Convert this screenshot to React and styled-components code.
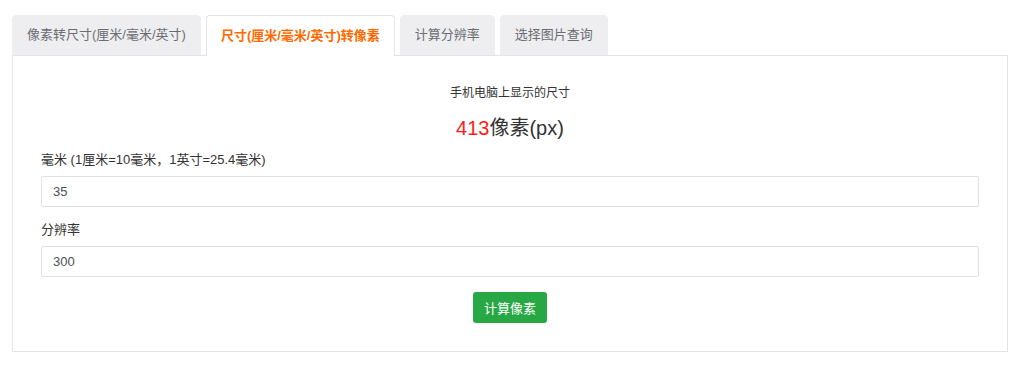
import React, { useState } from "react";
import styled, { createGlobalStyle } from "styled-components";

const GlobalStyle = createGlobalStyle`
  body {
    margin: 0;
    background: #fff;
    font-family: "Liberation Sans", "Noto Sans CJK SC", sans-serif;
    color: #333;
  }
`;

const tabs = [
  "像素转尺寸(厘米/毫米/英寸)",
  "尺寸(厘米/毫米/英寸)转像素",
  "计算分辨率",
  "选择图片查询",
];

const App = () => {
  const [active, setActive] = useState(1);
  const [mm, setMm] = useState("35");
  const [dpi, setDpi] = useState("300");
  const [px, setPx] = useState(413);

  // jsx
  return (
    <>
      <GlobalStyle />
      <Wrapper>
        <TabBar>
          {tabs.map((t, i) => (
            <Tab key={t} $active={i === active} onClick={() => setActive(i)}>
              {t}
            </Tab>
          ))}
        </TabBar>
        <Panel>
          <Caption>手机电脑上显示的尺寸</Caption>
          <Result>
            <Number>{px}</Number>像素(px)
          </Result>
          <Group>
            <Label htmlFor="mm">毫米 (1厘米=10毫米，1英寸=25.4毫米)</Label>
            <Input id="mm" value={mm} onChange={(e) => setMm(e.target.value)} />
          </Group>
          <Group $second>
            <Label htmlFor="dpi">分辨率</Label>
            <Input
              id="dpi"
              value={dpi}
              onChange={(e) => setDpi(e.target.value)}
            />
          </Group>
          <Actions>
            <Button
              type="button"
              onClick={() => setPx(Math.round((mm / 25.4) * dpi))}
            >
              计算像素
            </Button>
          </Actions>
        </Panel>
      </Wrapper>
    </>
  );
};

const Wrapper = styled.main`
  width: 996px;
  padding: 15px 0 0 12px;
`;

const TabBar = styled.nav`
  display: flex;
  align-items: flex-end;
  gap: 5px;
  height: 40px;
`;

const Tab = styled.button`
  box-sizing: border-box;
  height: ${(p) => (p.$active ? "41px" : "40px")};
  margin-bottom: ${(p) => (p.$active ? "-1px" : "0")};
  position: relative;
  z-index: ${(p) => (p.$active ? 1 : 0)};
  padding: 0 14px;
  border: 1px solid ${(p) => (p.$active ? "#e3e4e8" : "#eeeef0")};
  border-bottom: ${(p) => (p.$active ? "none" : "1px solid #eeeef0")};
  border-radius: 4px 4px 0 0;
  background: ${(p) => (p.$active ? "#fff" : "#eeeef0")};
  color: ${(p) => (p.$active ? "#ff6a00" : "#6b6d73")};
  font-family: inherit;
  font-size: 13px;
  font-weight: ${(p) => (p.$active ? 600 : 400)};
  line-height: 18px;
  cursor: pointer;
  white-space: nowrap;
`;

const Panel = styled.section`
  box-sizing: border-box;
  width: 996px;
  border: 1px solid #e3e4e8;
  padding: 28px 28px 28px;
`;

const Caption = styled.p`
  margin: 0;
  text-align: center;
  font-size: 12px;
  line-height: 18px;
  color: #333;
`;

const Result = styled.p`
  margin: 12px 0 0;
  text-align: center;
  font-size: 20px;
  line-height: 28px;
  color: #333;
`;

const Number = styled.span`
  color: #ff1a1a;
`;

const Group = styled.div`
  display: flex;
  flex-direction: column;
  margin-top: ${(p) => (p.$second ? "14px" : "9px")};
`;

const Label = styled.label`
  font-size: 13px;
  line-height: 18px;
  color: #333;
  margin-bottom: 7px;
`;

const Input = styled.input`
  box-sizing: border-box;
  height: 31px;
  width: 100%;
  padding: 0 11px;
  border: 1px solid #dfe1e6;
  border-radius: 2px;
  font-family: inherit;
  font-size: 13px;
  color: #495057;
  outline: none;
`;

const Actions = styled.div`
  display: flex;
  justify-content: center;
  margin-top: 15px;
`;

const Button = styled.button`
  height: 31px;
  padding: 0 11px;
  border: none;
  border-radius: 3px;
  background: #28a745;
  color: #fff;
  font-family: inherit;
  font-size: 13px;
  cursor: pointer;
`;

export default App;
